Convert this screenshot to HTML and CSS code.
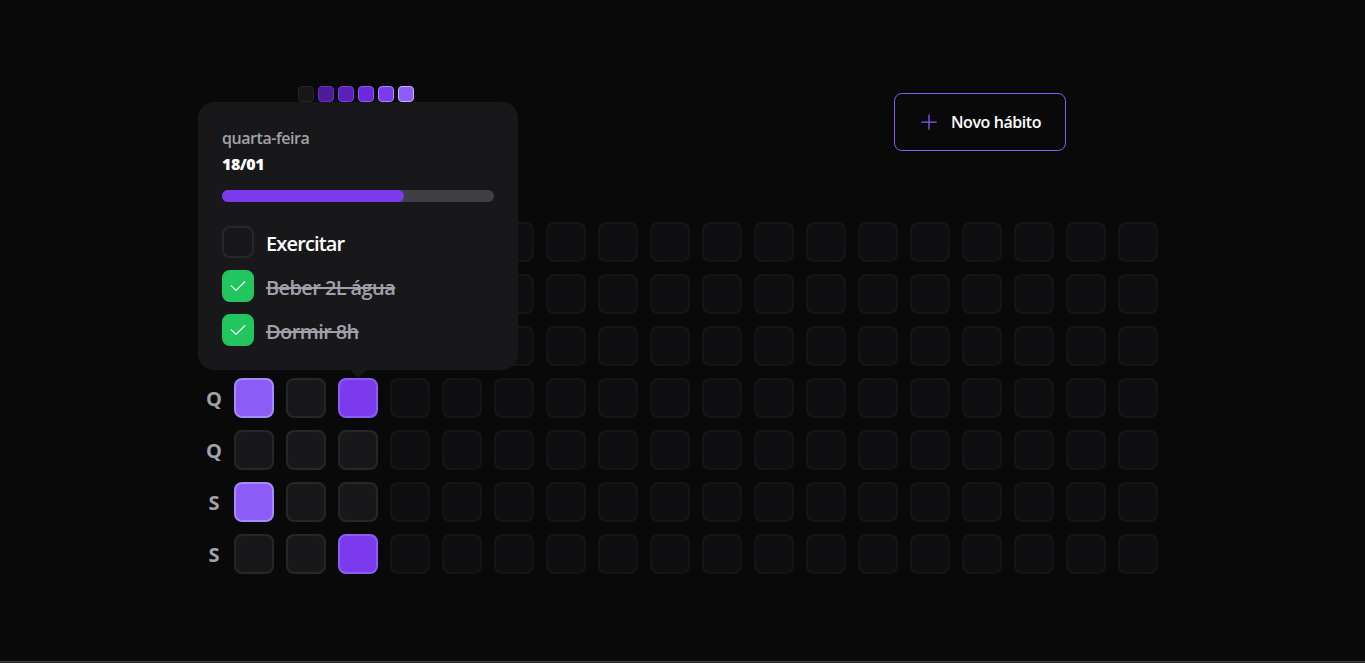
FILE: index.html
```html
<!DOCTYPE html>
<html lang="pt-BR">
<head>
<meta charset="utf-8">
<title>Habits</title>
<link rel="stylesheet" href="styles.css">
</head>
<body>
<main class="page">
  <header class="header">
    <div class="logo"><i class="dot"></i><i class="dot l1"></i><i class="dot l2"></i><i class="dot l3"></i><i class="dot l4"></i><i class="dot l5"></i></div>
    <button class="new-habit">
      <svg width="20" height="20" viewBox="0 0 20 20" fill="none" stroke="#8b5cf6" stroke-width="1.25" stroke-linecap="round"><path d="M2.8 10h14.4M10 2.8v14.4"/></svg>
      <span class="new-label">Novo hábito</span>
    </button>
  </header>
  <section class="summary">
    <div class="weekdays"><span>D</span><span>S</span><span>T</span><span>Q</span><span>Q</span><span>S</span><span>S</span></div>
    <div class="days" id="days"></div>
  </section>
  <aside class="popover">
    <span class="weekday">quarta-feira</span>
    <strong class="date">18/01</strong>
    <div class="progress"><div class="progress-bar"></div></div>
    <ul class="habits">
      <li><i class="box"></i><span class="open">Exercitar</span></li>
      <li class="done"><i class="box"><svg width="20" height="20" viewBox="0 0 20 20" fill="none" stroke="#fff" stroke-width="1.25" stroke-linecap="round" stroke-linejoin="round"><path d="M16.8 5.7 8 14.4 3.2 9.9"/></svg></i><span>Beber 2L água</span></li>
      <li class="done"><i class="box"><svg width="20" height="20" viewBox="0 0 20 20" fill="none" stroke="#fff" stroke-width="1.25" stroke-linecap="round" stroke-linejoin="round"><path d="M16.8 5.7 8 14.4 3.2 9.9"/></svg></i><span>Dormir 8h</span></li>
    </ul>
    <svg class="arrow" width="16" height="8" viewBox="0 0 16 8"><path d="M0 0h16L8 8z" fill="#18181b"/></svg>
  </aside>
  <footer class="edge"></footer>
</main>
<script src="main.js"></script>
</body>
</html>
```
FILE: styles.css
```css
* { box-sizing: border-box; margin: 0; padding: 0; }
body { background: #09090a; color: #fff; font-family: "Open Sans", "Noto Sans", sans-serif; }
.page { position: relative; height: 663px; overflow: hidden; display: flex; flex-direction: column; }
.header { width: 768px; margin: 86px 0 0 298px; height: 65px; display: flex; justify-content: space-between; }
.logo { display: flex; gap: 4px; }
.dot { width: 16px; height: 16px; border-radius: 4px; border: 1px solid #27272a; background: #18181b; }
.l1 { background: #4c1d95; border-color: #6d28d9; }
.l2 { background: #5b21b6; border-color: #7c3aed; }
.l3 { background: #6d28d9; border-color: #8b5cf6; }
.l4 { background: #7c3aed; border-color: #a78bfa; }
.l5 { background: #8b5cf6; border-color: #c4b5fd; }
.new-habit { width: 172px; height: 58px; margin-top: 7px; border: 1px solid #8b5cf6; border-radius: 8px; background: transparent; color: #fff; font: 600 16px/24px "Open Sans", sans-serif; letter-spacing: -.42px; display: flex; align-items: center; padding-left: 24px; gap: 12px; white-space: nowrap; }
.summary { display: flex; margin: 71px 0 0 194px; }
.weekdays, .days { display: grid; grid-template-rows: repeat(7, 40px); grid-auto-flow: column; gap: 12px; }
.weekdays { width: 40px; }
.weekdays span { display: flex; align-items: center; justify-content: center; font-weight: 700; font-size: 20px; line-height: 28px; color: #a1a1aa; padding-top: 2px; }
.day { width: 40px; height: 40px; border-radius: 8px; border: 2px solid #27272a; background: #18181b; }
.future { background: #0f0f11; border-color: #151517; }
.d4 { background: #7c3aed; border-color: #8b5cf6; }
.d5 { background: #8b5cf6; border-color: #a78bfa; }
.popover { position: absolute; left: 198px; top: 102px; width: 320px; height: 268px; border-radius: 16px; background: #18181b; padding: 24px; display: flex; flex-direction: column; }
.weekday { font-weight: 600; font-size: 16px; line-height: 24px; letter-spacing: -.45px; color: #a1a1aa; }
.date { font-weight: 800; font-size: 16px; line-height: 20px; letter-spacing: -.5px; margin-top: 4px; }
.progress { height: 12px; margin-top: 16px; border-radius: 12px; background: #3f3f46; flex: none; }
.progress-bar { width: 67%; height: 12px; border-radius: 12px; background: #7c3aed; }
.habits { list-style: none; margin-top: 24px; display: flex; flex-direction: column; gap: 12px; }
.habits li { display: flex; align-items: center; gap: 12px; height: 32px; font-weight: 600; font-size: 20px; line-height: 28px; white-space: nowrap; }
.habits span { padding-top: 4px; letter-spacing: -.6px; }
.habits .open { letter-spacing: -.85px; }
.box { width: 32px; height: 32px; border-radius: 8px; border: 2px solid #27272a; background: #18181b; display: flex; align-items: center; justify-content: center; }
.done { color: #a1a1aa; }
.done span { text-decoration: line-through; text-decoration-thickness: 2px; }
.done .box { background: #22c55e; border-color: #22c55e; }
.arrow { position: absolute; left: 152px; top: 268px; }
.edge { margin-top: auto; height: 2px; background: #222; border-top: 1px solid #444; }
```
FILE: main.js
```js
const levels = { 3: 'd5', 5: 'd5', 17: 'd4', 20: 'd4' };
const days = document.getElementById('days');
for (let i = 0; i < 126; i++) {
  const day = document.createElement('div');
  day.className = 'day ' + (i > 20 ? 'future' : levels[i] || '');
  days.appendChild(day);
}
```
